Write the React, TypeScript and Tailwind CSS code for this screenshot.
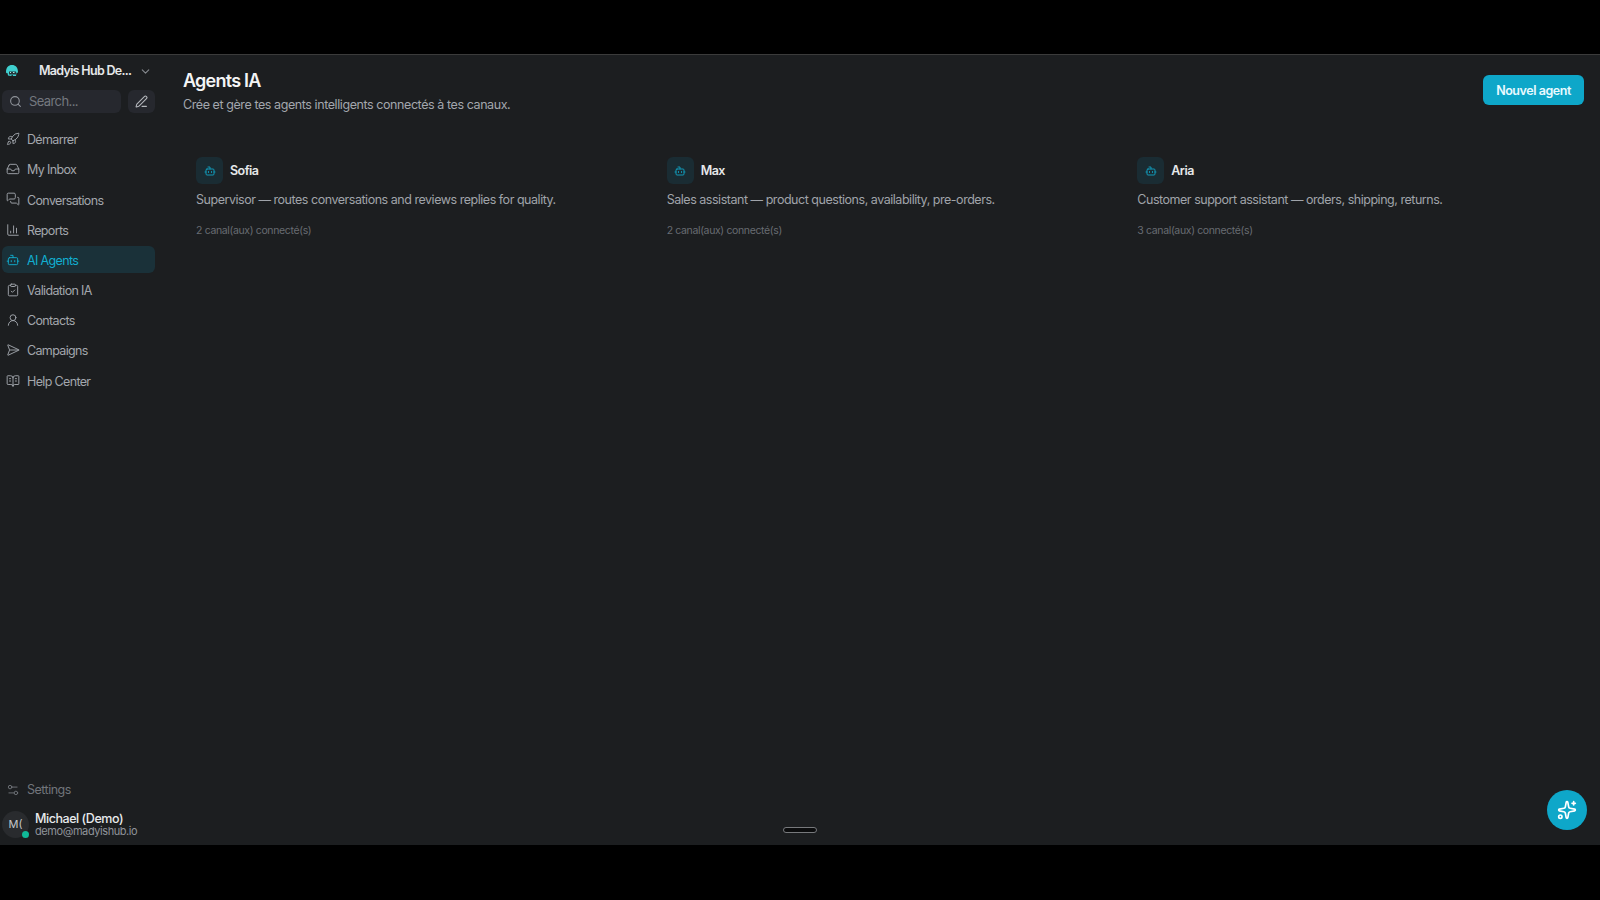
import { Bot, BookOpenText, ChartColumn, ChevronDown, ClipboardCheck, Inbox, MessagesSquare, PenLine, Rocket, Search, SendHorizontal, Settings2, Sparkles, UserRound } from "lucide-react";

const NAV = [
  { label: "Démarrer", icon: Rocket },
  { label: "My Inbox", icon: Inbox },
  { label: "Conversations", icon: MessagesSquare },
  { label: "Reports", icon: ChartColumn },
  { label: "AI Agents", icon: Bot, active: true },
  { label: "Validation IA", icon: ClipboardCheck },
  { label: "Contacts", icon: UserRound },
  { label: "Campaigns", icon: SendHorizontal },
  { label: "Help Center", icon: BookOpenText },
];

const AGENTS = [
  { name: "Sofia", desc: "Supervisor — routes conversations and reviews replies for quality.", channels: 2 },
  { name: "Max", desc: "Sales assistant — product questions, availability, pre-orders.", channels: 2 },
  { name: "Aria", desc: "Customer support assistant — orders, shipping, returns.", channels: 3 },
];

const Logo = () => (
  <svg width="14" height="14" viewBox="0 0 14 14" className="shrink-0">
    <path d="M1 8C1 3.500 3.500 1 7 1s6 2.500 6 7c0 1-1 1-1.500 .5L11 12H8l-.5-1.500L6 12 3 11.500 2.500 9C1.500 9.500 1 9 1 8z" fill="#3fd0cf" />
    <path d="M4 7.500h7v3H4z" fill="#25353a" />
    <path d="M5 8.500h1M8 8.500h1.500" stroke="#a8e6e4" strokeWidth="1" />
  </svg>
);

const Sidebar = () => (
  <aside className="w-[157px] shrink-0 flex flex-col pl-[2px] pr-[2px] pb-[7px]">
    <div className="h-[34px] flex items-center pl-[3px] pr-[3px] pb-[2px]">
      <Logo />
      <span className="ml-[20px] flex-1 text-[12.5px] font-semibold text-[#e6e8ea] tracking-[-0.7px] whitespace-nowrap">Madyis Hub De...</span>
      <ChevronDown className="w-[13px] h-[13px] text-[#85898f]" />
    </div>
    <div className="flex gap-[7px] mt-[1px]">
      <div className="w-[119px] h-[23px] rounded-md bg-[#26282e] flex items-center pl-[7px] gap-[7px]">
        <Search className="w-[13px] h-[13px] text-[#8f939a]" />
        <span className="text-[13px] text-[#74787f] tracking-[-0.6px]">Search...</span>
      </div>
      <div className="w-[27px] h-[23px] rounded-md bg-[#26282e] flex items-center justify-center">
        <PenLine className="w-[13px] h-[13px] text-[#b4b7bc]" />
      </div>
    </div>
    <nav className="mt-[12px] flex flex-col gap-[3.2px]">
      {NAV.map(({ label, icon: Icon, active }) => (
        <div
          key={label}
          className={`h-[27px] rounded-md flex items-center pl-[4px] gap-[7px] text-[12.5px] tracking-[-0.65px] ${active ? "bg-[#1a3139] text-[#11aed0]" : "text-[#a3a7ad]"}`}
        >
          <Icon className="w-[14px] h-[14px] mt-[1px]" strokeWidth={1.6} />
          <span className="pt-[4px]">{label}</span>
        </div>
      ))}
    </nav>
    <div className="mt-auto flex items-center pl-[4px] gap-[7px] h-[20px] mb-[4px] text-[12.5px] tracking-[-0.5px] text-[#71757b]">
      <Settings2 className="w-[14px] h-[14px]" strokeWidth={1.6} />
      Settings
    </div>
    <div className="mt-[7px] flex items-center gap-[6px]">
      <div className="relative w-[27px] h-[27px] rounded-full bg-[#292b2e] flex items-center justify-center text-[11px] text-[#c3c6ca]">
        M(
        <span className="absolute right-[0px] bottom-[0px] w-[7px] h-[7px] rounded-full bg-[#10b998]" />
      </div>
      <div className="flex flex-col">
        <span className="text-[12.5px] leading-[13px] font-medium text-[#e8eaec] tracking-[-0.45px]">Michael (Demo)</span>
        <span className="text-[11px] leading-[13px] text-[#90949a] tracking-[-0.42px]">demo@madyishub.io</span>
      </div>
    </div>
  </aside>
);

const AgentCard = ({ name, desc, channels }: { name: string; desc: string; channels: number }) => (
  <div className="p-[13px]">
    <div className="flex items-center gap-[7px]">
      <div className="w-[27px] h-[27px] rounded-md bg-[#1a2c33] flex items-center justify-center">
        <Bot className="w-[12px] h-[12px] text-[#11a3c4]" strokeWidth={1.8} />
      </div>
      <span className="pt-[2px] text-[12.5px] font-semibold text-[#e6e8ea] tracking-[-0.55px]">{name}</span>
    </div>
    <p className="mt-[7px] text-[12.5px] leading-[18px] text-[#a0a4aa] tracking-[-0.47px]">{desc}</p>
    <p className="mt-[15px] text-[10.5px] leading-[14px] text-[#686c72] tracking-[-0.36px]">{channels} canal(aux) connecté(s)</p>
  </div>
);

export default function App() {
  return (
    <div className="relative h-screen bg-black flex flex-col overflow-hidden font-['Inter',sans-serif]">
      <div className="h-[54px] shrink-0" />
      <div className="flex-1 min-h-0 flex bg-[#1c1e20] border-t border-[#3b3b3b]">
        <Sidebar />
        <main className="flex-1 min-w-0 pl-[26px] pr-[16px] pt-[14px]">
          <div className="flex items-start justify-between">
            <div>
              <h1 className="text-[18px] leading-[24px] font-semibold text-[#f4f5f6] tracking-[-0.75px]">Agents IA</h1>
              <p className="mt-[1px] text-[12.5px] leading-[22px] text-[#a3a7ad] tracking-[-0.42px]">Crée et gère tes agents intelligents connectés à tes canaux.</p>
            </div>
            <button className="mt-[6px] w-[101px] h-[30px] pt-[3px] rounded-md bg-[#0ea7c9] text-[12.5px] font-semibold text-[#eafaff] tracking-[-0.45px]">Nouvel agent</button>
          </div>
          <div className="mt-[28px] grid grid-cols-3 gap-[11px]">
            {AGENTS.map((a) => (
              <AgentCard key={a.name} {...a} />
            ))}
          </div>
        </main>
      </div>
      <div className="h-[55px] shrink-0" />
      <div className="absolute left-[783px] top-[827px] w-[34px] h-[6px] rounded-full border border-[#77797c] bg-[#0b0c0d]" />
      <button className="absolute left-[1547px] top-[790px] w-[40px] h-[40px] rounded-full bg-[#0ea7c9] flex items-center justify-center">
        <Sparkles className="w-[20px] h-[20px] text-white" />
      </button>
    </div>
  );
}
